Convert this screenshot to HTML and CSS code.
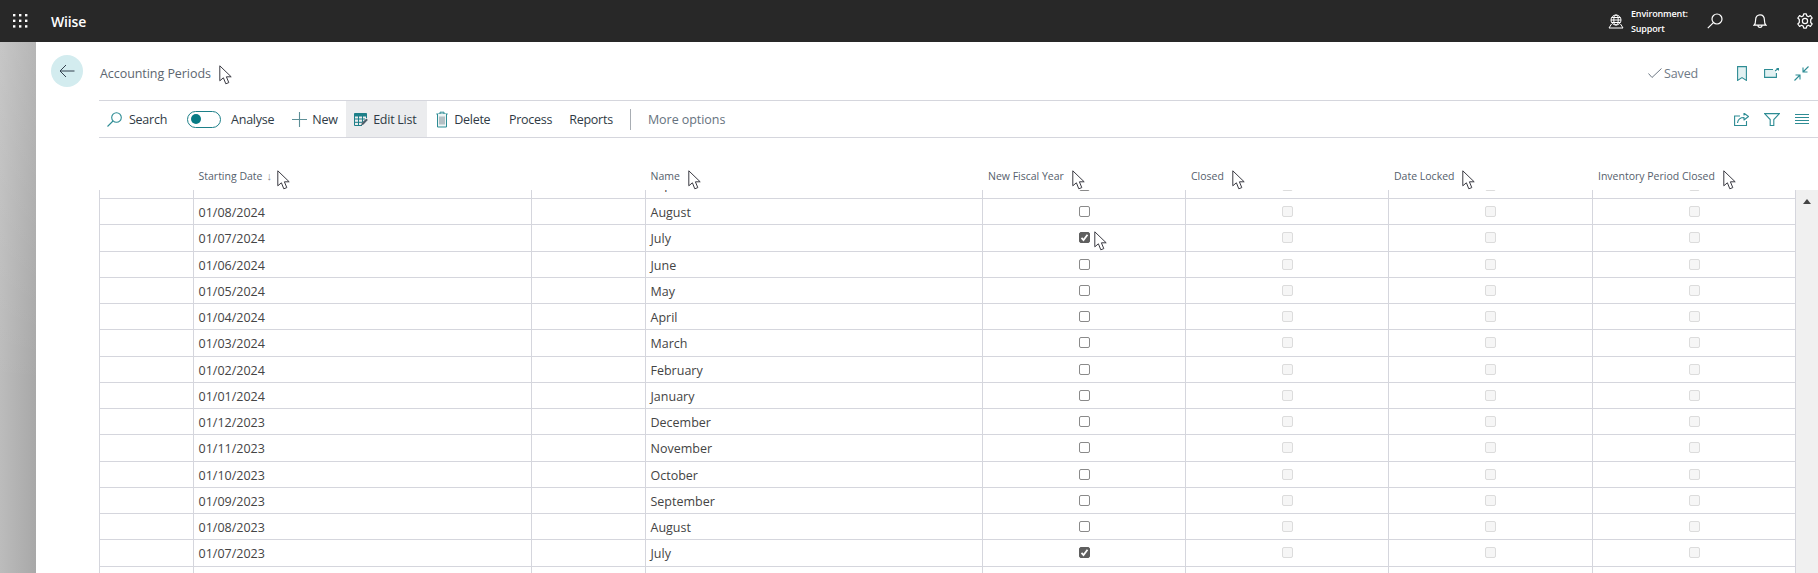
FILE: index.html
```html
<!DOCTYPE html>
<html lang="en">
<head>
<meta charset="utf-8">
<title>Accounting Periods</title>
<link rel="stylesheet" href="styles.css">
</head>
<body>
<svg class="defs" aria-hidden="true">
  <symbol id="cursor" viewBox="0 0 13 20"><path d="M.8 .8V15.800L4.400 12.800 6.800 18.800 9.800 17.600 7.400 11.800H12.200Z" fill="#fff" stroke="#3a3a42" stroke-width="1" stroke-linejoin="round"/></symbol>
</svg>

<header class="topbar">
  <svg class="waffle" viewBox="0 0 15 14"><g fill="#fff"><rect x="0" y="0" width="2.4" height="2.4"/><rect x="6" y="0" width="2.4" height="2.4"/><rect x="12" y="0" width="2.4" height="2.4"/><rect x="0" y="5.6" width="2.4" height="2.4"/><rect x="6" y="5.6" width="2.4" height="2.4"/><rect x="12" y="5.6" width="2.4" height="2.4"/><rect x="0" y="11.2" width="2.4" height="2.4"/><rect x="6" y="11.2" width="2.4" height="2.4"/><rect x="12" y="11.2" width="2.4" height="2.4"/></g></svg>
  <span class="brand">Wiise</span>
  <div class="top-right">
    <svg class="globe" viewBox="0 0 16 15" fill="none" stroke="#fff" stroke-width="1"><circle cx="8" cy="6" r="5"/><ellipse cx="8" cy="6" rx="2.2" ry="5"/><path d="M3 6H13M3.7 3.5H12.3M3.7 8.5H12.3M3.5 10 1 14H15L12.5 10"/></svg>
    <div class="env"><span>Environment:</span><span>Support</span></div>
    <svg class="t-search" viewBox="0 0 16 16" fill="none" stroke="#fff" stroke-width="1.2"><circle cx="10" cy="6" r="5"/><path d="M6.4 9.6 .8 15.2"/></svg>
    <svg class="t-bell" viewBox="0 0 14 14" fill="none" stroke="#fff" stroke-width="1.2"><path d="M1 11.2C2.5 10 2.6 8.4 2.6 6 2.6 2.8 4.4 .8 7 .8S11.400 2.800 11.400 6C11.400 8.400 11.500 10 13 11.200ZM5 11.500C5 14 9 14 9 11.500"/></svg>
    <svg class="t-gear" viewBox="0 0 16 16" fill="none" stroke="#fff" stroke-width="1.2"><circle cx="8" cy="8" r="2.6"/><path d="M6.700 .8H9.300L9.800 2.900 11.500 3.700 13.400 2.600 15.200 5 13.700 6.500V9.500L15.200 11 13.400 13.400 11.500 12.300 9.800 13.100 9.300 15.200H6.700L6.200 13.100 4.500 12.300 2.600 13.400 .8 11 2.300 9.500V6.500L.8 5 2.600 2.600 4.500 3.700 6.200 2.900Z" stroke-linejoin="round"/></svg>
  </div>
</header>

<div class="shell">
  <div class="rail"></div>
  <main class="page">
    <button class="back" aria-label="Back"><svg viewBox="0 0 16 14" fill="none" stroke="#33414f" stroke-width="1"><path d="M15.500 7H1M7 1 1 7 7 13"/></svg></button>
    <div class="content">
      <div class="titlebar">
        <h1 class="title">Accounting Periods<svg class="cur"><use href="#cursor"/></svg></h1>
        <div class="title-actions">
          <svg class="saved-check" viewBox="0 0 14 10" fill="none" stroke="#6f7a86" stroke-width="1"><path d="M.5 5.500 4 9.500 13.500 .5"/></svg>
          <span class="saved">Saved</span>
          <svg class="i-book" viewBox="0 0 10 15" fill="#e2f1f2" stroke="#2d8c94" stroke-width="1.1"><path d="M.6 .6H9.400V14.400L5 11.600 .6 14.400Z"/></svg>
          <svg class="i-open" viewBox="0 0 15 10" fill="#e2f1f2" stroke="#2d8c94" stroke-width="1.1"><path d="M9 1.500H.6V9.400H12.400V5"/><path d="M11 3 14.500 .2M12.500 .5H14.500V2.500" fill="none"/></svg>
          <svg class="i-collapse" viewBox="0 0 15 15" fill="none" stroke="#2d8c94" stroke-width="1.1"><path d="M14.500 .5 9 6M9 1.500V6H13.500M.5 14.500 6 9M1.500 9H6V13.500"/></svg>
        </div>
      </div>

      <nav class="toolbar">
        <div class="tool first"><svg class="ic-search" viewBox="0 0 15 15" fill="none" stroke="#2d8c94" stroke-width="1.1"><circle cx="9.500" cy="5.500" r="4.800"/><path d="M6 9 .5 14.500"/></svg><span>Search</span></div>
        <div class="tool analyse"><span class="toggle"><span class="knob"></span></span><span>Analyse</span></div>
        <div class="tool new"><svg class="ic-plus" viewBox="0 0 15 15" stroke="#5d8f97" stroke-width="1.1"><path d="M7.500 0V15M0 7.500H15"/></svg><span>New</span></div>
        <div class="tool active"><svg class="ic-edit" viewBox="0 0 14 13"><path d="M.5 .5H12.500V3H.5Z" fill="#1c7f88" stroke="#1c7f88"/><path d="M.5 3V12.500H8M12.500 3V5M4.500 3V12.500M8.500 3V9M.5 6H11M.5 9.300H8" fill="none" stroke="#1c7f88"/><path d="M7 12.500 8 9.500 12.500 5.500 13.800 7 9.500 11.500Z" fill="#4d5f6b"/></svg><span>Edit List</span></div>
        <div class="tool delete"><svg class="ic-trash" viewBox="0 0 12 17" fill="none" stroke="#2d8c94" stroke-width="1"><path d="M.3 3H11.700M4 3V1.200H8V3"/><path d="M1.500 3V16H10.500V3" fill="#eef5f5"/><path d="M4 5.500V13.500M6 5.500V13.500M8 5.500V13.500" stroke="#7a8b94"/></svg><span>Delete</span></div>
        <div class="tool process"><span>Process</span></div>
        <div class="tool reports"><span>Reports</span></div>
        <span class="sep"></span>
        <div class="tool more"><span>More options</span></div>
        <div class="tool-right">
          <svg class="i-share" viewBox="0 0 15 13" fill="none" stroke="#2d8c94" stroke-width="1.1"><path d="M6 3H.6V12.500H12.500V8"/><path d="M3.500 10C4 6.500 6.500 4.500 10 4.500V7L14.500 3.500 10 .2V2.500" stroke-linejoin="round"/></svg>
          <svg class="i-filter" viewBox="0 0 16 13" fill="none" stroke="#2d8c94" stroke-width="1.1"><path d="M.6 .6H15.400L9.800 6.500V12.500H6.200V6.500Z"/></svg>
          <svg class="i-list" viewBox="0 0 14 10" stroke="#2d8c94" stroke-width="1"><path d="M0 .5H14M0 3.500H14M0 6.500H14M0 9.500H14"/></svg>
        </div>
      </nav>

      <div class="thead">
        <div></div>
        <div class="th sorted"><span class="label">Starting Date<i class="sort">↓</i><svg class="cur"><use href="#cursor"/></svg></span></div>
        <div></div>
        <div class="th"><span class="label">Name<svg class="cur"><use href="#cursor"/></svg></span></div>
        <div class="th"><span class="label">New Fiscal Year<svg class="cur"><use href="#cursor"/></svg></span></div>
        <div class="th"><span class="label">Closed<svg class="cur"><use href="#cursor"/></svg></span></div>
        <div class="th"><span class="label">Date Locked<svg class="cur"><use href="#cursor"/></svg></span></div>
        <div class="th"><span class="label">Inventory Period Closed<svg class="cur"><use href="#cursor"/></svg></span></div>
      </div>

      <div class="table-wrap">
        <div class="rows">
          <div class="row"><div class="c"></div><div class="c t">01/09/2024</div><div class="c"></div><div class="c t">September</div><div class="c b"><span class="cb"></span></div><div class="c b"><span class="cb off"></span></div><div class="c b"><span class="cb off"></span></div><div class="c b"><span class="cb off"></span></div></div>
          <div class="row"><div class="c"></div><div class="c t">01/08/2024</div><div class="c"></div><div class="c t">August</div><div class="c b"><span class="cb"></span></div><div class="c b"><span class="cb off"></span></div><div class="c b"><span class="cb off"></span></div><div class="c b"><span class="cb off"></span></div></div>
          <div class="row"><div class="c"></div><div class="c t">01/07/2024</div><div class="c"></div><div class="c t">July</div><div class="c b"><span class="cb on"><svg viewBox="0 0 9 9" fill="none" stroke="#fff" stroke-width="1.800"><path d="M1.500 4.800 3.500 7 7.500 1.800"/></svg><svg class="cur"><use href="#cursor"/></svg></span></div><div class="c b"><span class="cb off"></span></div><div class="c b"><span class="cb off"></span></div><div class="c b"><span class="cb off"></span></div></div>
          <div class="row"><div class="c"></div><div class="c t">01/06/2024</div><div class="c"></div><div class="c t">June</div><div class="c b"><span class="cb"></span></div><div class="c b"><span class="cb off"></span></div><div class="c b"><span class="cb off"></span></div><div class="c b"><span class="cb off"></span></div></div>
          <div class="row"><div class="c"></div><div class="c t">01/05/2024</div><div class="c"></div><div class="c t">May</div><div class="c b"><span class="cb"></span></div><div class="c b"><span class="cb off"></span></div><div class="c b"><span class="cb off"></span></div><div class="c b"><span class="cb off"></span></div></div>
          <div class="row"><div class="c"></div><div class="c t">01/04/2024</div><div class="c"></div><div class="c t">April</div><div class="c b"><span class="cb"></span></div><div class="c b"><span class="cb off"></span></div><div class="c b"><span class="cb off"></span></div><div class="c b"><span class="cb off"></span></div></div>
          <div class="row"><div class="c"></div><div class="c t">01/03/2024</div><div class="c"></div><div class="c t">March</div><div class="c b"><span class="cb"></span></div><div class="c b"><span class="cb off"></span></div><div class="c b"><span class="cb off"></span></div><div class="c b"><span class="cb off"></span></div></div>
          <div class="row"><div class="c"></div><div class="c t">01/02/2024</div><div class="c"></div><div class="c t">February</div><div class="c b"><span class="cb"></span></div><div class="c b"><span class="cb off"></span></div><div class="c b"><span class="cb off"></span></div><div class="c b"><span class="cb off"></span></div></div>
          <div class="row"><div class="c"></div><div class="c t">01/01/2024</div><div class="c"></div><div class="c t">January</div><div class="c b"><span class="cb"></span></div><div class="c b"><span class="cb off"></span></div><div class="c b"><span class="cb off"></span></div><div class="c b"><span class="cb off"></span></div></div>
          <div class="row"><div class="c"></div><div class="c t">01/12/2023</div><div class="c"></div><div class="c t">December</div><div class="c b"><span class="cb"></span></div><div class="c b"><span class="cb off"></span></div><div class="c b"><span class="cb off"></span></div><div class="c b"><span class="cb off"></span></div></div>
          <div class="row"><div class="c"></div><div class="c t">01/11/2023</div><div class="c"></div><div class="c t">November</div><div class="c b"><span class="cb"></span></div><div class="c b"><span class="cb off"></span></div><div class="c b"><span class="cb off"></span></div><div class="c b"><span class="cb off"></span></div></div>
          <div class="row"><div class="c"></div><div class="c t">01/10/2023</div><div class="c"></div><div class="c t">October</div><div class="c b"><span class="cb"></span></div><div class="c b"><span class="cb off"></span></div><div class="c b"><span class="cb off"></span></div><div class="c b"><span class="cb off"></span></div></div>
          <div class="row"><div class="c"></div><div class="c t">01/09/2023</div><div class="c"></div><div class="c t">September</div><div class="c b"><span class="cb"></span></div><div class="c b"><span class="cb off"></span></div><div class="c b"><span class="cb off"></span></div><div class="c b"><span class="cb off"></span></div></div>
          <div class="row"><div class="c"></div><div class="c t">01/08/2023</div><div class="c"></div><div class="c t">August</div><div class="c b"><span class="cb"></span></div><div class="c b"><span class="cb off"></span></div><div class="c b"><span class="cb off"></span></div><div class="c b"><span class="cb off"></span></div></div>
          <div class="row"><div class="c"></div><div class="c t">01/07/2023</div><div class="c"></div><div class="c t">July</div><div class="c b"><span class="cb on"><svg viewBox="0 0 9 9" fill="none" stroke="#fff" stroke-width="1.800"><path d="M1.500 4.800 3.500 7 7.500 1.800"/></svg></span></div><div class="c b"><span class="cb off"></span></div><div class="c b"><span class="cb off"></span></div><div class="c b"><span class="cb off"></span></div></div>
          <div class="row"><div class="c"></div><div class="c t">01/06/2023</div><div class="c"></div><div class="c t">June</div><div class="c b"><span class="cb"></span></div><div class="c b"><span class="cb off"></span></div><div class="c b"><span class="cb off"></span></div><div class="c b"><span class="cb off"></span></div></div>
        </div>
        <div class="scrollbar"><span class="arrow"></span></div>
      </div>
    </div>
  </main>
</div>
</body>
</html>
```

FILE: styles.css
```css
* { box-sizing: border-box; }
html, body { margin: 0; height: 100%; }
body {
  width: 1818px;
  height: 573px;
  overflow: hidden;
  display: flex;
  flex-direction: column;
  background: #fff;
  font-family: "Open Sans", "Noto Sans", "Liberation Sans", sans-serif;
  font-size: 12.5px;
  color: #333;
}
svg { display: block; flex: none; }
.defs { width: 0; height: 0; position: absolute; }

/* top bar */
.topbar {
  height: 42px;
  flex: none;
  background: #282828;
  display: flex;
  align-items: center;
  padding-left: 13px;
  color: #fff;
}
.waffle { width: 15px; height: 14px; }
.brand { margin-left: 23px; font-size: 14px; font-weight: 600; letter-spacing: -.15px; }
.top-right { margin-left: auto; display: flex; align-items: center; padding-right: 5px; }
.globe { width: 16px; height: 15px; }
.env {
  margin-left: 7px;
  width: 68px;
  display: flex;
  flex-direction: column;
  gap: 4px;
  font-size: 9px;
  line-height: 11px;
  font-weight: 600;
  letter-spacing: -.15px;
}
.t-search { width: 16px; height: 16px; margin-left: 8px; }
.t-bell { width: 14px; height: 14px; margin-left: 30px; }
.t-gear { width: 16px; height: 16px; margin-left: 30px; }

/* page */
.shell { flex: 1; display: flex; min-height: 0; }
.rail {
  width: 36px;
  flex: none;
  background:
    linear-gradient(to bottom, rgba(255, 255, 255, .16), rgba(255, 255, 255, 0) 65%),
    linear-gradient(to right, #bcbcbc, #a8a8a8);
}
.page { flex: 1; display: flex; min-width: 0; }
.back {
  width: 32px;
  height: 32px;
  margin: 13px 0 0 15px;
  padding: 0;
  border: 0;
  border-radius: 50%;
  background: #d3ecef;
  display: flex;
  align-items: center;
  justify-content: center;
  flex: none;
}
.back svg { width: 16px; height: 14px; }
.content { flex: 1; margin-left: 16px; display: flex; flex-direction: column; min-width: 0; }

.titlebar {
  height: 59px;
  flex: none;
  border-bottom: 1px solid #d5d6dd;
  display: flex;
  align-items: center;
  padding-top: 4px;
}
.title { margin: 0 0 0 1px; font-size: 12.5px; font-weight: 400; color: #5d6670; position: relative; letter-spacing: -.06px; }
.title .cur { left: calc(100% + 8px); top: 0; }
.title-actions { margin-left: auto; display: flex; align-items: center; padding-right: 9px; color: #6f7a86; }
.saved-check { width: 14px; height: 10px; margin-top: -1px; }
.saved { margin-left: 2px; font-size: 12.5px; width: 73px; letter-spacing: -.12px; }
.i-book { width: 10px; height: 15px; }
.i-open { width: 15px; height: 10px; margin-left: 17px; }
.i-collapse { width: 15px; height: 15px; margin-left: 15px; }

.toolbar {
  height: 37px;
  flex: none;
  border-bottom: 1px solid #d5d6dd;
  display: flex;
  align-items: stretch;
  letter-spacing: -.25px;
  color: #2f3a45;
}
.tool { display: flex; align-items: center; }
.first { padding-left: 8px; }
.ic-search { width: 15px; height: 15px; margin-right: 7px; }
.analyse { margin-left: 20px; }
.toggle {
  width: 34px;
  height: 17px;
  border: 1px solid #1c7f88;
  border-radius: 9px;
  display: flex;
  align-items: center;
  padding-left: 3px;
  margin-right: 10px;
}
.knob { width: 10px; height: 10px; border-radius: 50%; background: #077b85; }
.new { margin-left: 18px; }
.ic-plus { width: 15px; height: 15px; margin-right: 5px; }
.active { margin-left: 8.5px; width: 81px; padding-left: 8px; background: #ebecee; }
.ic-edit { width: 14px; height: 13px; margin-right: 5px; }
.delete { margin-left: 9px; }
.ic-trash { width: 12px; height: 17px; margin-right: 6px; }
.process { margin-left: 18.5px; }
.reports { margin-left: 17px; }
.sep { width: 1px; height: 21px; background: #a8adb3; align-self: center; margin-left: 17px; }
.more { margin-left: 17px; color: #66727e; letter-spacing: -.05px; }
.tool-right { margin-left: auto; display: flex; align-items: center; padding-right: 9px; }
.i-share { width: 15px; height: 13px; }
.i-filter { width: 16px; height: 13px; margin-left: 15px; }
.i-list { width: 14px; height: 10px; margin-left: 15px; }

/* table */
.thead, .row {
  display: grid;
  grid-template-columns: 93.5px 338.5px 113.5px 337.5px 203px 203px 204px 203px;
}
.thead { height: 52px; flex: none; width: 1696px; }
.th { padding: 31px 0 0 6px; font-size: 10.5px; line-height: 14px; color: #55606c; }
.label { position: relative; white-space: nowrap; display: inline-block; }
.sort { font-style: normal; font-weight: 700; margin-left: 4px; color: #8a8a8a; font-size: 11px; }
.cur { position: absolute; left: calc(100% + 8px); top: 1px; width: 13px; height: 20px; }
.sorted .cur { left: calc(100% + 5px); }

.table-wrap { flex: 1; min-height: 0; display: flex; overflow: hidden; }
.rows { width: 1696px; flex: none; overflow: hidden; }
.row { height: 26.25px; border-bottom: 1px solid #d5d6dd; }
.row:first-child { margin-top: -17.25px; }
.c { border-left: 1px solid #d5d6dd; display: flex; align-items: center; min-width: 0; }
.t { padding: 2px 0 0 5px; white-space: nowrap; color: #444; }
.row:first-child .t { padding: 0 0 2px 5px; }
.b { justify-content: center; }
.cb {
  width: 11px;
  height: 11px;
  border: 1px solid #8a8a8a;
  border-radius: 2px;
  background: #fff;
  position: relative;
  display: block;
}
.cb.on { background: #5f5f5f; border-color: #5f5f5f; }
.cb.on svg:first-child { width: 9px; height: 9px; }
.cb.off { border-color: #dcdcdc; background: #f6f6f6; }
.cb .cur { left: 14px; top: -2px; }
.scrollbar { flex: 1; background: #f0f0f0; border-left: 1px solid #d5d6dd; display: flex; justify-content: center; padding-top: 9px; }
.arrow { width: 0; height: 0; border: 4.5px solid transparent; border-top: 0; border-bottom: 5px solid #444; }
```
